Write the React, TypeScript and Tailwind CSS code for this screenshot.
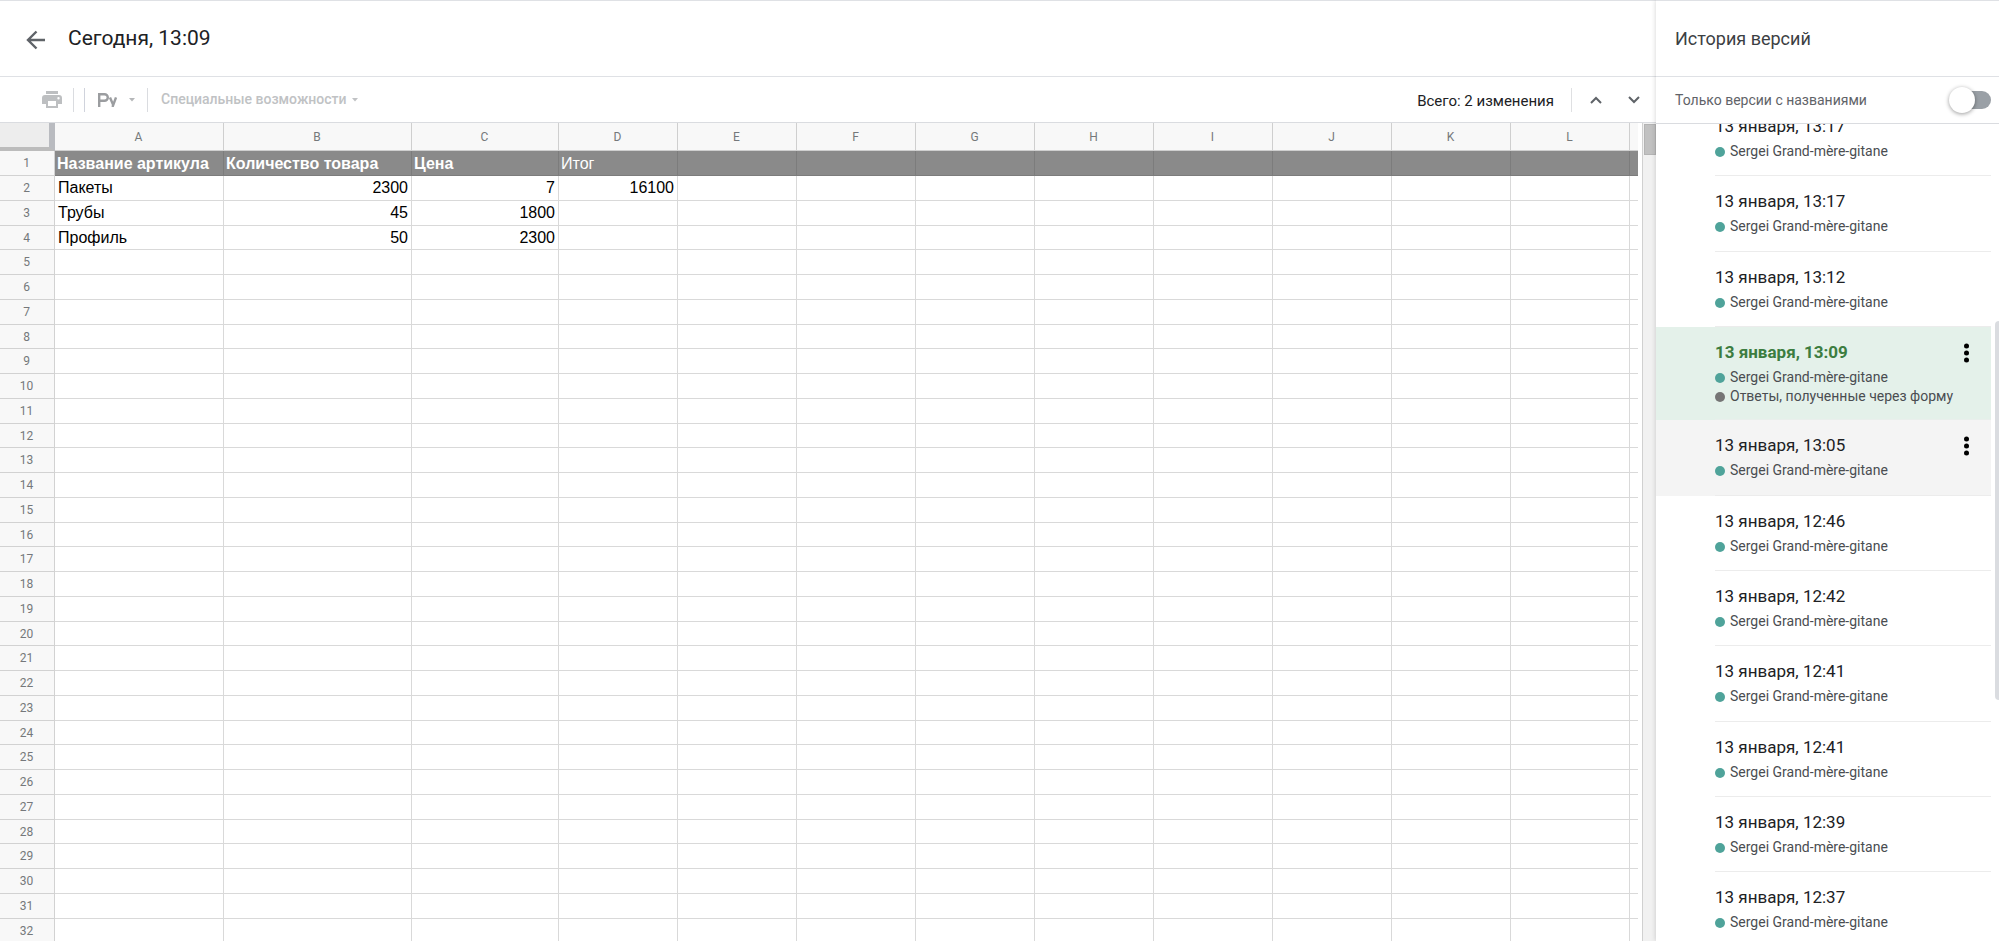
import React, { useState } from 'react';

const columns = [
  { name: 'A', width: 'w-[169px]' },
  { name: 'B', width: 'w-[188px]' },
  { name: 'C', width: 'w-[147px]' },
  { name: 'D', width: 'w-[119px]' },
  { name: 'E', width: 'w-[119px]' },
  { name: 'F', width: 'w-[119px]' },
  { name: 'G', width: 'w-[119px]' },
  { name: 'H', width: 'w-[119px]' },
  { name: 'I', width: 'w-[119px]' },
  { name: 'J', width: 'w-[119px]' },
  { name: 'K', width: 'w-[119px]' },
  { name: 'L', width: 'w-[119px]' },
];

const cells: string[][] = [
  ['Название артикула', 'Количество товара', 'Цена', 'Итог'],
  ['Пакеты', '2300', '7', '16100'],
  ['Трубы', '45', '1800'],
  ['Профиль', '50', '2300'],
];

const rowCount = 32;

const author = 'Sergei Grand-mère-gitane';

type Version = {
  time: string;
  current?: boolean;
  hovered?: boolean;
  form?: boolean;
};

const versions: Version[] = [
  { time: '13:17' },
  { time: '13:17' },
  { time: '13:12' },
  { time: '13:09', current: true, form: true },
  { time: '13:05', hovered: true },
  { time: '12:46' },
  { time: '12:42' },
  { time: '12:41' },
  { time: '12:41' },
  { time: '12:39' },
  { time: '12:37' },
];

function Caret() {
  return (
    <svg width="6" height="4" viewBox="0 0 6 4" fill="currentColor" aria-hidden="true">
      <path d="M0 0h6L3 3.5z" />
    </svg>
  );
}

function Header() {
  return (
    <header className="flex h-[77px] shrink-0 items-center gap-5 border-y border-[#dfe1e5] pl-6">
      <button aria-label="Назад" className="pt-[3px] text-[#5f6368]">
        <svg width="24" height="24" viewBox="0 0 24 24" fill="none" stroke="currentColor" strokeWidth="2.4">
          <path d="M21 12H4M12.5 3.5L4 12l8.5 8.5" />
        </svg>
      </button>
      <h1 className="pb-[2px] text-[21px] leading-7 text-[#202124]">Сегодня, 13:09</h1>
    </header>
  );
}

function Toolbar() {
  return (
    <div className="flex h-[46px] shrink-0 items-center border-b border-[#dadce0] pl-[42px] pr-4">
      <button aria-label="Печать" className="text-[#bdbfc1]">
        <svg width="20" height="17" viewBox="0 0 20 17" fill="currentColor" fillRule="evenodd">
          <path d="M4 0h12v3H4zM17 4H3a3 3 0 0 0-3 3v6h4v4h12v-4h4V7a3 3 0 0 0-3-3zm-3 11H6v-5h8zm2.500-6.500a1.200 1.200 0 1 1 0-2.400 1.200 1.200 0 0 1 0 2.400z" />
        </svg>
      </button>
      <span className="ml-[11px] h-6 w-px bg-[#dadce0]" />
      <span className="ml-[10px] h-6 w-px bg-[#d0d3dc]" />
      <button aria-label="Способ ввода" className="ml-3 flex items-center gap-3 text-[#b5b7b9]">
        <svg width="20" height="15" viewBox="0 0 20 15" fill="none" stroke="#9b9da0" strokeWidth="2.4">
          <path d="M2.200 15V2.200h5.300a3.300 3.300 0 0 1 0 6.600H2.200M13 5.500l3 7M19 5.500L15.500 15" />
        </svg>
        <Caret />
      </button>
      <span className="ml-3 h-6 w-px bg-[#dadce0]" />
      <button className="ml-[13px] flex items-center gap-[5px] text-[14px] font-medium text-[#c0c2c4]">
        Специальные возможности
        <Caret />
      </button>
      <span className="ml-auto pt-1 text-[15px] text-[#202124]">Всего: 2 изменения</span>
      <span className="ml-[17px] h-6 w-px bg-[#dfe0e2]" />
      <button aria-label="Предыдущее изменение" className="ml-[18px] text-[#5f6368]">
        <svg width="12" height="8" viewBox="0 0 12 8" fill="none" stroke="currentColor" strokeWidth="2">
          <path d="M1 7l5-5 5 5" />
        </svg>
      </button>
      <button aria-label="Следующее изменение" className="ml-[26px] text-[#5f6368]">
        <svg width="12" height="8" viewBox="0 0 12 8" fill="none" stroke="currentColor" strokeWidth="2">
          <path d="M1 1l5 5 5-5" />
        </svg>
      </button>
    </div>
  );
}

function Sheet() {
  return (
    <div className="flex min-h-0 flex-1">
      <div className="min-w-0 flex-1 overflow-hidden">
        <table className="w-full table-fixed border-separate border-spacing-0">
          <thead>
            <tr className="h-7 bg-[#f8f8f8] text-[12px] text-[#75787b]">
              <td className="w-[55px] border-b-4 border-r-[6px] border-b-[#bcbcbc] border-r-[#b9bbc0] bg-[#ededed] p-0" />
              {columns.map(col => (
                <th
                  key={col.name}
                  scope="col"
                  className={`${col.width} border-b border-r border-[#cfcfcf] py-0 pl-0 pr-px font-normal`}
                >
                  {col.name}
                </th>
              ))}
              <td className="border-b border-[#cfcfcf] p-0" />
            </tr>
          </thead>
          <tbody>
            {Array.from({ length: rowCount }, (_, row) => (
              <tr key={row} className="h-[25px] nth-[4n]:h-6">
                <th
                  scope="row"
                  className="border-b border-r border-[#d2d2d2] bg-[#f8f8f8] py-0 pl-0 pr-px text-[12px] font-normal leading-4 text-[#75787b]"
                >
                  {row + 1}
                </th>
                {columns.map((col, i) => (
                  <td
                    key={col.name}
                    className={`whitespace-nowrap border-b border-r font-['Liberation_Sans',Arial,sans-serif] text-[16px] leading-5 ${
                      row === 0
                        ? `border-[#7c7c7c] bg-[#8a8a8a] px-[2px] pb-0 pt-px text-white ${i < 3 ? 'font-bold' : ''}`
                        : `border-[#d9d9d9] px-[3px] py-0 text-black ${i > 0 ? 'text-right' : ''}`
                    }`}
                  >
                    {cells[row]?.[i]}
                  </td>
                ))}
                <td className={`border-b p-0 ${row === 0 ? 'border-[#7c7c7c] bg-[#8a8a8a]' : 'border-[#d9d9d9]'}`} />
              </tr>
            ))}
          </tbody>
        </table>
      </div>
      <div className="ml-1 w-[14px] border-l border-[#d0d0d0] bg-[#f1f1f1] pl-px">
        <div className="mt-px h-[31px] border border-[#b4b4b4] bg-[#c1c1c1]" />
      </div>
    </div>
  );
}

function Editor({ color, name }: { color: string; name: string }) {
  return (
    <p className="flex items-center gap-[5px] text-[14px] leading-[19px] text-[#4a4d51]">
      <span className={`size-[10px] rounded-full ${color}`} />
      {name}
    </p>
  );
}

function VersionItem({ version }: { version: Version }) {
  const { time, current, hovered, form } = version;

  return (
    <li
      className={`flex min-h-[75px] pl-[59px] nth-[3n+2]:min-h-[76px] ${
        current ? 'bg-[#e4f1ea]' : hovered ? 'bg-[#f4f4f4]' : ''
      }`}
    >
      <div className={`relative flex-1 border-b pb-[13px] pt-[13px] ${current ? 'border-[#e9efec]' : 'border-[#ececec]'}`}>
        <p
          className={`mb-1 text-[17px] leading-6 ${
            current ? 'font-bold text-[#3c7d40]' : 'text-[#202124]'
          }`}
        >
          13 января, {time}
        </p>
        <Editor color="bg-[#4fa39a]" name={author} />
        {form && <Editor color="bg-[#757575]" name="Ответы, полученные через форму" />}
        {(current || hovered) && (
          <button aria-label="Другие действия" className="absolute right-[22px] top-4 text-black">
            <svg width="5" height="20" viewBox="0 0 5 20" fill="currentColor">
              <circle cx="2.500" cy="3" r="2.500" />
              <circle cx="2.500" cy="10" r="2.500" />
              <circle cx="2.500" cy="17" r="2.500" />
            </svg>
          </button>
        )}
      </div>
    </li>
  );
}

function HistoryPanel() {
  const [namedOnly, setNamedOnly] = useState(false);

  return (
    <aside className="z-10 flex w-[343px] shrink-0 flex-col bg-white shadow-[0_0_5px_rgba(0,0,0,0.18)]">
      <h2 className="flex h-[77px] shrink-0 items-center border-y border-[#dfe1e5] pb-px pl-[19px] text-[18px] text-[#3c4043]">
        История версий
      </h2>
      <label className="flex h-[47px] shrink-0 items-center justify-between border-b border-[#dadce0] pl-[19px] pr-2 text-[14px] text-[#5f6368]">
        Только версии с названиями
        <span className="relative flex items-center">
          <input
            type="checkbox"
            role="switch"
            checked={namedOnly}
            onChange={e => setNamedOnly(e.target.checked)}
            className="peer h-[18px] w-[38px] appearance-none rounded-full bg-[#9aa0a6] checked:bg-[#81c995]"
          />
          <span className="pointer-events-none absolute -left-1 size-[26px] rounded-full bg-white shadow-[0_1px_4px_rgba(0,0,0,0.4)] peer-checked:left-4" />
        </span>
      </label>
      <div className="relative min-h-0 flex-1 overflow-hidden pr-2">
        <ul className="-mt-[23px]">
          {versions.map((version, i) => (
            <VersionItem key={i} version={version} />
          ))}
        </ul>
        <div className="absolute right-0 top-[197px] h-[379px] w-1 rounded-l bg-[#dadce0]" />
      </div>
    </aside>
  );
}

export default function App() {
  return (
    <div className="flex h-screen overflow-hidden bg-white font-[Roboto,sans-serif]">
      <main className="flex min-w-0 flex-1 flex-col">
        <Header />
        <Toolbar />
        <Sheet />
      </main>
      <HistoryPanel />
    </div>
  );
}
